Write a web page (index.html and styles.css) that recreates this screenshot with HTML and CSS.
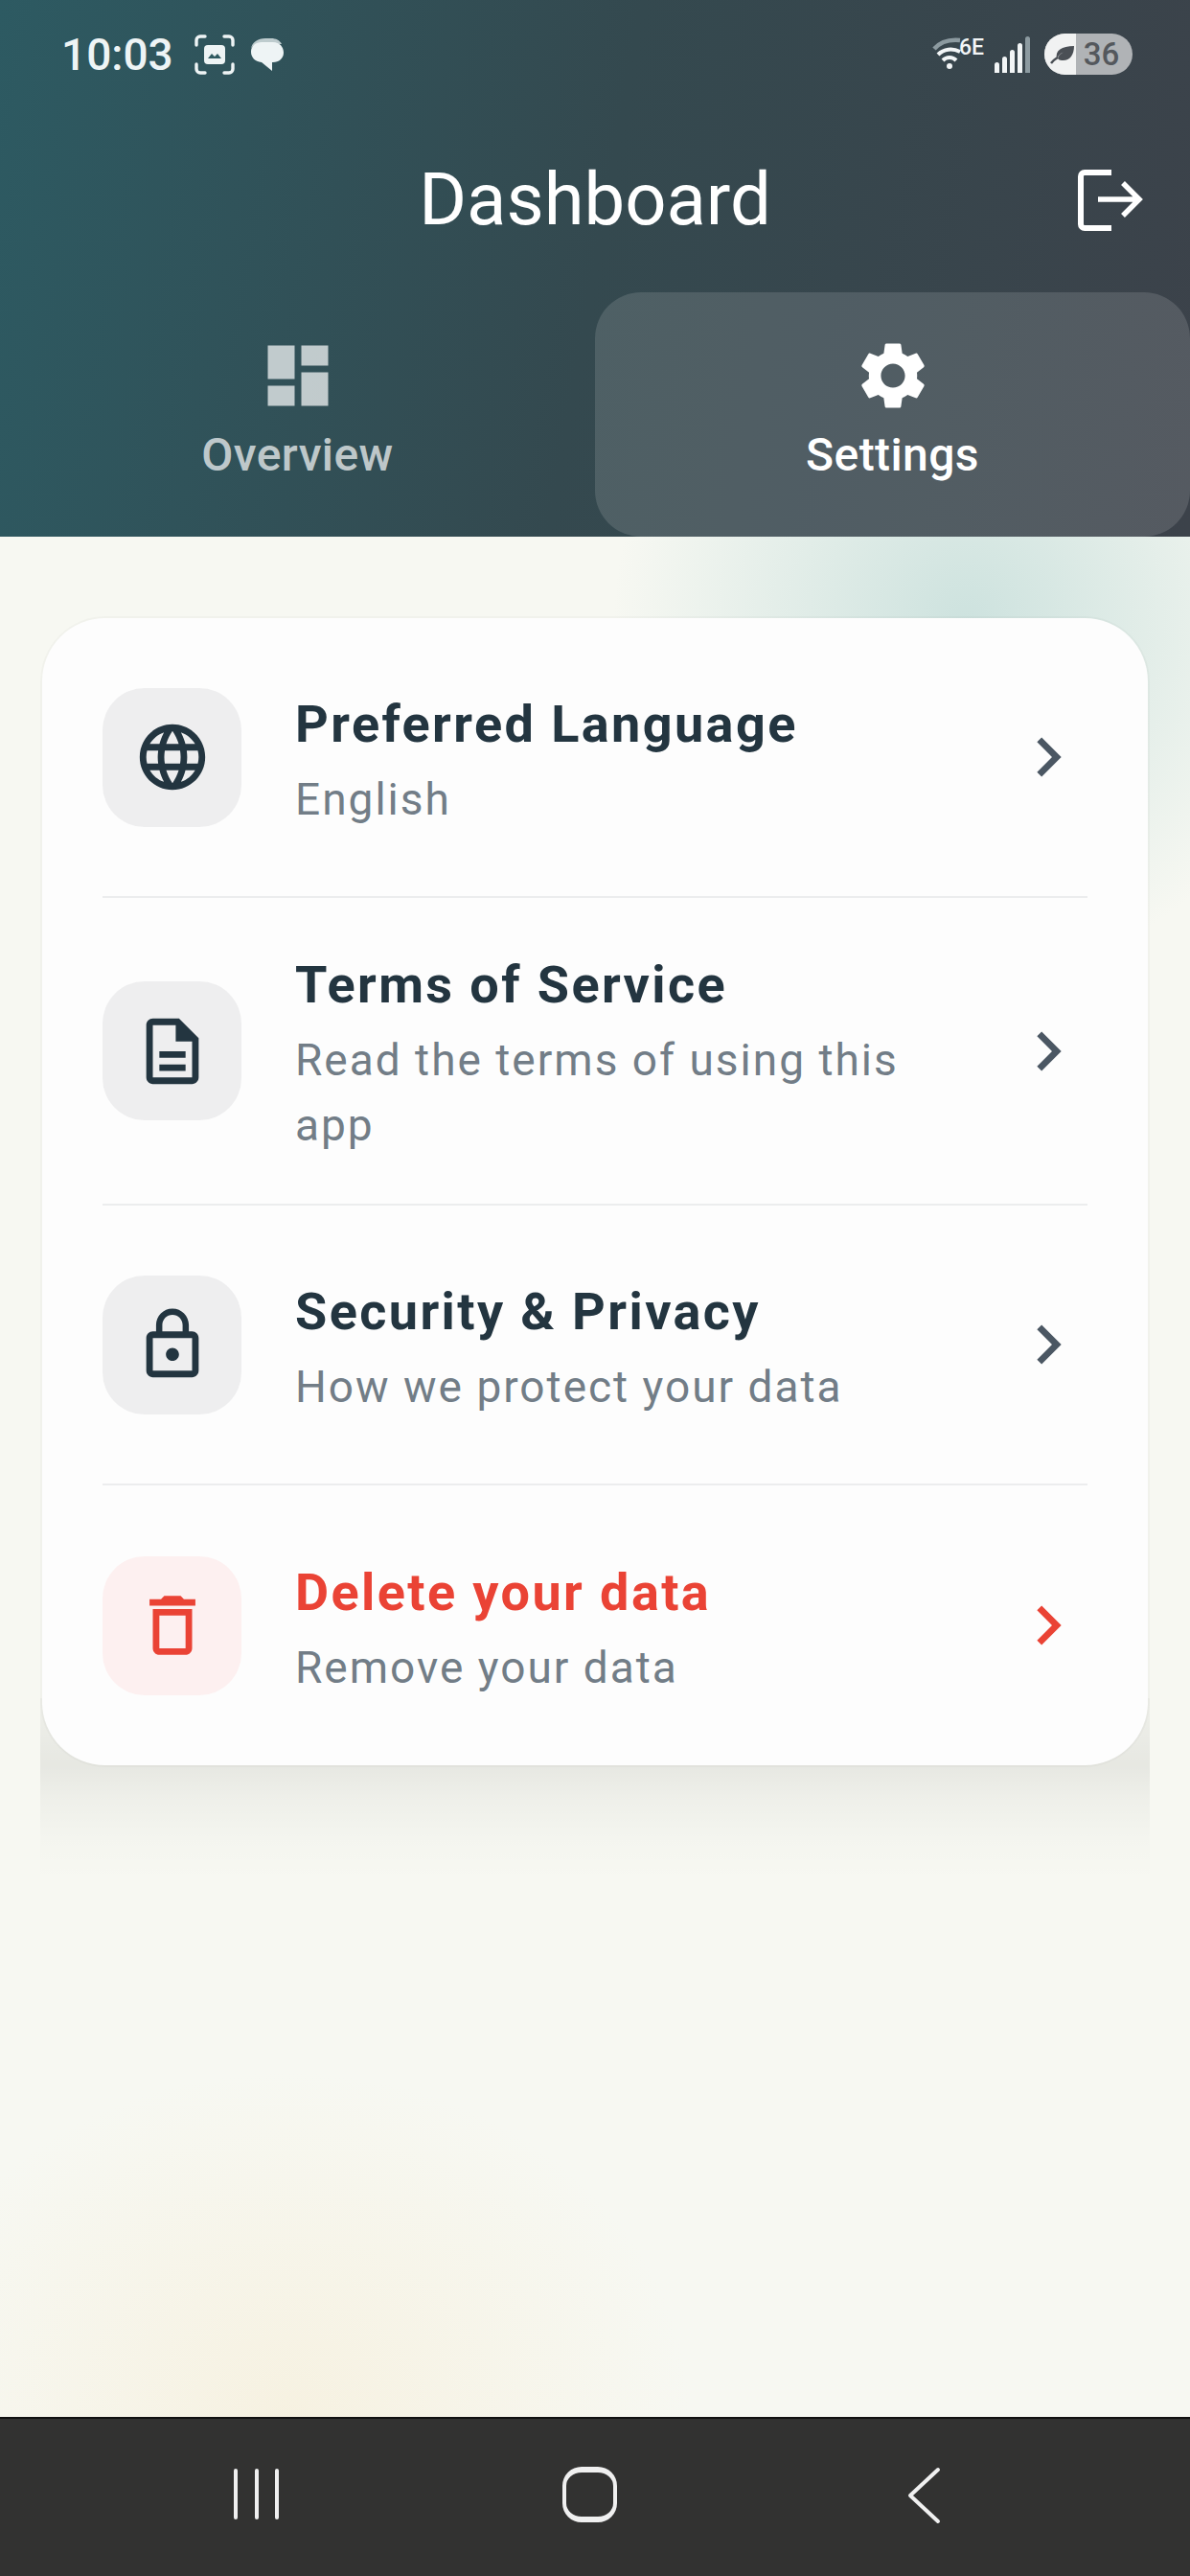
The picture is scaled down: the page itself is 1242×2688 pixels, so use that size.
FILE: index.html
```html
<!DOCTYPE html>
<html lang="en">
<head>
    <meta charset="UTF-8">
    <meta name="viewport" content="width=device-width, initial-scale=1.0">
    <title>Dashboard</title>
    <link rel="stylesheet" href="styles.css">
</head>
<body>
    <div class="phone">
        <header class="header">
            <div class="status-bar">
                <div class="status-left">
                    <span class="clock">10:03</span>
                    <svg class="status-shot" viewBox="0 0 42 42">
                        <path d="M2 11V6a4 4 0 0 1 4-4h5M31 2h5a4 4 0 0 1 4 4v5M40 31v5a4 4 0 0 1-4 4h-5M11 40H6a4 4 0 0 1-4-4v-5" fill="none" stroke="#eef4f5" stroke-width="3.4" stroke-linecap="round"/>
                        <rect x="10" y="11" width="22" height="20" rx="4" fill="#eef4f5"/>
                        <path d="M14 25l4-5 3 3 3-3 4 5z" fill="#2f5a60"/>
                    </svg>
                    <svg class="status-chat" viewBox="0 0 37 36">
                        <path d="M2 12C3 5 9 1 17 1h6c5 0 9 2 11 6H12C7 7 3 9 2 12z" fill="#eef4f5" opacity=".75"/>
                        <path d="M13 5h12c7 0 11 5 11 11s-5 10-11 10h-1v9L13 26C6 25 2 21 2 15S7 5 13 5z" fill="#eef4f5"/>
                    </svg>
                </div>
                <div class="status-right">
                    <div class="wifi">
                        <svg class="wifi-arcs" viewBox="0 0 34 34">
                            <path d="M2 13C9 5 19 3 29 4" fill="none" stroke="#8c9aa0" stroke-width="4.5"/>
                            <path d="M6 19c6-6 15-7 23-3" fill="none" stroke="#f2f5f6" stroke-width="4"/>
                            <path d="M11 25c4-4 10-4 14 0" fill="none" stroke="#f2f5f6" stroke-width="4"/>
                            <circle cx="18" cy="31" r="3" fill="#f2f5f6"/>
                        </svg>
                        <span class="wifi-label">6E</span>
                    </div>
                    <div class="signal">
                        <span class="bar bar-1"></span>
                        <span class="bar bar-2"></span>
                        <span class="bar bar-3"></span>
                        <span class="bar bar-4"></span>
                        <span class="bar bar-5"></span>
                    </div>
                    <div class="battery">
                        <div class="battery-fill">
                            <svg class="leaf" viewBox="0 0 26 20">
                                <path d="M7 14C5 6 12 1 25 1c0 10-5 16-13 15-2 0-3-1-4-2 1-4 5-7 10-8-5 1-8 3-11 8z" fill="#4a4f55"/>
                                <path d="M1 19c2-3 4-4 7-6" fill="none" stroke="#4a4f55" stroke-width="2.4"/>
                            </svg>
                        </div>
                        <span class="battery-num">36</span>
                    </div>
                </div>
            </div>

            <div class="app-bar">
                <h1>Dashboard</h1>
                <svg class="logout" viewBox="0 0 68 64">
                    <path d="M35 3H7a4 4 0 0 0-4 4v50a4 4 0 0 0 4 4h28" fill="none" stroke="#fff" stroke-width="6"/>
                    <path d="M21 31h42M47 14l17 17-17 17" fill="none" stroke="#fff" stroke-width="5.5"/>
                </svg>
            </div>

            <nav class="tabs">
                <div class="tab">
                    <svg class="tab-icon" viewBox="0 0 24 24"><path d="M3 13h8V3H3v10zm0 8h8v-6H3v6zm10 0h8V11h-8v10zm0-18v6h8V3h-8z"/></svg>
                    <span>Overview</span>
                </div>
                <div class="tab active">
                    <svg class="tab-icon" viewBox="0 0 24 24"><path d="M19.14 12.94c.04-.3.06-.61.06-.94 0-.32-.02-.64-.07-.94l2.03-1.58c.18-.14.23-.41.12-.61l-1.92-3.32c-.12-.22-.37-.29-.59-.22l-2.39.96c-.5-.38-1.03-.7-1.62-.94l-.36-2.54c-.04-.24-.24-.41-.48-.41h-3.84c-.24 0-.43.17-.47.41l-.36 2.54c-.59.24-1.13.57-1.62.94l-2.39-.96c-.22-.08-.47 0-.59.22L2.74 8.87c-.12.21-.08.47.12.61l2.03 1.58c-.05.3-.09.63-.09.94s.02.64.07.94l-2.03 1.58c-.18.14-.23.41-.12.61l1.92 3.32c.12.22.37.29.59.22l2.39-.96c.5.38 1.03.7 1.62.94l.36 2.54c.05.24.24.41.48.41h3.84c.24 0 .44-.17.47-.41l.36-2.54c.59-.24 1.13-.56 1.62-.94l2.39.96c.22.08.47 0 .59-.22l1.92-3.32c.12-.22.07-.47-.12-.61l-2.01-1.58zM12 15.6c-1.98 0-3.6-1.62-3.6-3.6s1.62-3.6 3.6-3.6 3.6 1.62 3.6 3.6-1.62 3.6-3.6 3.6z"/></svg>
                    <span>Settings</span>
                </div>
            </nav>
        </header>

        <main class="content">
            <section class="card">
                <div class="row">
                    <div class="row-icon">
                        <svg viewBox="0 0 24 24"><path d="M11.99 2C6.47 2 2 6.48 2 12s4.47 10 9.99 10C17.52 22 22 17.52 22 12S17.52 2 11.99 2zm6.93 6h-2.95c-.32-1.25-.78-2.45-1.38-3.56 1.84.63 3.37 1.91 4.33 3.56zM12 4.04c.83 1.2 1.48 2.53 1.91 3.96h-3.82c.43-1.43 1.08-2.76 1.91-3.96zM4.26 14C4.1 13.36 4 12.69 4 12s.1-1.36.26-2h3.38c-.08.66-.14 1.32-.14 2 0 .68.06 1.34.14 2H4.26zm.82 2h2.95c.32 1.25.78 2.45 1.38 3.56-1.84-.63-3.37-1.9-4.33-3.56zm2.95-8H5.08c.96-1.66 2.49-2.93 4.33-3.56C8.81 5.55 8.35 6.75 8.03 8zM12 19.96c-.83-1.2-1.48-2.53-1.91-3.96h3.82c-.43 1.43-1.08 2.76-1.91 3.96zM14.34 14H9.66c-.09-.66-.16-1.32-.16-2 0-.68.07-1.35.16-2h4.68c.09.65.16 1.32.16 2 0 .68-.07 1.34-.16 2zm.25 5.56c.6-1.11 1.06-2.31 1.38-3.56h2.95c-.96 1.65-2.49 2.93-4.33 3.56zM16.36 14c.08-.66.14-1.32.14-2 0-.68-.06-1.34-.14-2h3.38c.16.64.26 1.31.26 2s-.1 1.36-.26 2h-3.38z"/></svg>
                    </div>
                    <div class="row-text">
                        <div class="row-title">Preferred Language</div>
                        <div class="row-sub">English</div>
                    </div>
                    <svg class="chevron" viewBox="0 0 24 24"><path d="M10 6L8.59 7.41 13.17 12l-4.58 4.59L10 18l6-6z"/></svg>
                </div>
                <div class="row">
                    <div class="row-icon">
                        <svg viewBox="0 0 24 24"><path d="M8 16h8v2H8zm0-4h8v2H8zm6-10H6c-1.1 0-2 .9-2 2v16c0 1.1.89 2 1.99 2H18c1.1 0 2-.9 2-2V8l-6-6zm4 18H6V4h7v5h5v11z"/></svg>
                    </div>
                    <div class="row-text">
                        <div class="row-title">Terms of Service</div>
                        <div class="row-sub">Read the terms of using this app</div>
                    </div>
                    <svg class="chevron" viewBox="0 0 24 24"><path d="M10 6L8.59 7.41 13.17 12l-4.58 4.59L10 18l6-6z"/></svg>
                </div>
                <div class="row">
                    <div class="row-icon">
                        <svg viewBox="0 0 24 24"><path d="M12 17c1.1 0 2-.9 2-2s-.9-2-2-2-2 .9-2 2 .9 2 2 2zm6-9h-1V6c0-2.76-2.24-5-5-5S7 3.24 7 6v2H6c-1.1 0-2 .9-2 2v10c0 1.1.9 2 2 2h12c1.1 0 2-.9 2-2V10c0-1.1-.9-2-2-2zM8.9 6c0-1.71 1.39-3.1 3.1-3.1s3.1 1.39 3.1 3.1v2H8.9V6zM18 20H6V10h12v10z"/></svg>
                    </div>
                    <div class="row-text">
                        <div class="row-title">Security &amp; Privacy</div>
                        <div class="row-sub">How we protect your data</div>
                    </div>
                    <svg class="chevron" viewBox="0 0 24 24"><path d="M10 6L8.59 7.41 13.17 12l-4.58 4.59L10 18l6-6z"/></svg>
                </div>
                <div class="row danger">
                    <div class="row-icon">
                        <svg viewBox="0 0 24 24"><path d="M6 19c0 1.1.9 2 2 2h8c1.1 0 2-.9 2-2V7H6v12zM8 9h8v10H8V9zm7.5-5l-1-1h-5l-1 1H5v2h14V4z"/></svg>
                    </div>
                    <div class="row-text">
                        <div class="row-title">Delete your data</div>
                        <div class="row-sub">Remove your data</div>
                    </div>
                    <svg class="chevron" viewBox="0 0 24 24"><path d="M10 6L8.59 7.41 13.17 12l-4.58 4.59L10 18l6-6z"/></svg>
                </div>
            </section>
        </main>

        <footer class="nav-bar">
            <div class="nav-recents"><span></span><span></span><span></span></div>
            <div class="nav-home"></div>
            <svg class="nav-back" viewBox="0 0 36 60"><path d="M33 3L4 30l29 27" fill="none" stroke="#f0f0f0" stroke-width="4" stroke-linecap="round" stroke-linejoin="round"/></svg>
        </footer>
    </div>
</body>
</html>
```

FILE: styles.css
```css
* {
    box-sizing: border-box;
}

body {
    margin: 0;
    font-family: Roboto, "Liberation Sans", sans-serif;
    background-color: #f7f8f2;
}

.phone {
    width: 1242px;
    height: 2688px;
    display: flex;
    flex-direction: column;
    overflow: hidden;
}

/* header */
.header {
    height: 560px;
    display: flex;
    flex-direction: column;
    background: linear-gradient(100deg, #2d5a62 0%, #34494f 50%, #3c424a 100%);
    color: #fff;
}

.status-bar {
    height: 115px;
    padding: 35px 60px 0 64px;
    display: flex;
    justify-content: space-between;
    align-items: flex-start;
}

.status-left,
.status-right {
    display: flex;
    align-items: center;
}

.clock {
    font-size: 46px;
    font-weight: 500;
    line-height: 44px;
    color: #eef4f5;
}

.status-shot {
    width: 42px;
    height: 42px;
    margin-left: 22px;
}

.status-chat {
    width: 37px;
    height: 36px;
    margin-left: 15px;
}

.wifi {
    width: 54px;
    height: 38px;
    position: relative;
}

.wifi-arcs {
    width: 34px;
    height: 34px;
    display: block;
}

.wifi-label {
    position: absolute;
    top: 0;
    right: 0;
    font-size: 23px;
    font-weight: 500;
    line-height: 24px;
    color: #f2f5f6;
}

.signal {
    width: 37px;
    height: 38px;
    margin-left: 11px;
    display: flex;
    align-items: flex-end;
    justify-content: space-between;
}

.bar {
    width: 5px;
    border-radius: 3px 3px 0 0;
    background-color: #f2f5f6;
}

.bar-1 { height: 11px; }
.bar-2 { height: 17px; }
.bar-3 { height: 24px; }
.bar-4 { height: 31px; }
.bar-5 { height: 38px; background-color: #8c9aa0; }

.battery {
    width: 92px;
    height: 43px;
    margin-left: 15px;
    border-radius: 22px;
    overflow: hidden;
    display: flex;
    background-color: #b0b3b6;
}

.battery-fill {
    width: 33px;
    display: flex;
    align-items: center;
    justify-content: flex-end;
    padding-right: 1px;
    background-color: #f1f2f2;
}

.leaf {
    width: 26px;
    height: 20px;
}

.battery-num {
    flex: 1;
    padding-right: 6px;
    text-align: center;
    font-size: 33px;
    font-weight: 500;
    line-height: 43px;
    color: #54585d;
}

.app-bar {
    height: 190px;
    position: relative;
    display: flex;
    align-items: flex-start;
    justify-content: center;
}

.app-bar h1 {
    margin: 0;
    padding-top: 47px;
    font-size: 76px;
    font-weight: 400;
    line-height: 92px;
}

.logout {
    position: absolute;
    top: 62px;
    right: 49px;
    width: 68px;
    height: 64px;
}

.tabs {
    flex: 1;
    display: flex;
}

.tab {
    flex: 1;
    display: flex;
    flex-direction: column;
    align-items: center;
    padding-top: 45px;
    font-size: 48px;
    font-weight: 500;
    letter-spacing: 0.4px;
    color: rgba(255, 255, 255, 0.7);
    border-radius: 48px;
}

.tab span {
    margin-top: 13px;
    line-height: 56px;
}

.tab-icon {
    width: 84px;
    height: 84px;
    fill: currentColor;
}

.tab.active {
    color: #fff;
    background-color: rgba(255, 255, 255, 0.13);
}

/* settings list */
.content {
    flex: 1;
    position: relative;
    z-index: 0;
    padding: 85px 44px 0;
    background:
        radial-gradient(circle 370px at 1010px 90px, rgba(170, 208, 206, 0.55), transparent),
        radial-gradient(ellipse 420px 360px at 300px 100%, rgba(246, 238, 216, 0.65), transparent);
}

.card {
    position: relative;
    border-radius: 66px;
    padding: 0 63px;
    background-color: #fdfdfd;
    box-shadow: 0 0 0 2px rgba(0, 0, 0, 0.025);
}

/* soft shadow under the card, cut off straight at the sides */
.card::after {
    content: "";
    position: absolute;
    z-index: -1;
    left: -2px;
    right: -2px;
    top: calc(100% - 70px);
    height: 190px;
    background: linear-gradient(rgba(0, 0, 0, 0.03), rgba(0, 0, 0, 0.065) 37%, rgba(0, 0, 0, 0.035) 55%, rgba(0, 0, 0, 0.012) 78%, rgba(0, 0, 0, 0));
}

.row {
    min-height: 292px;
    display: flex;
    align-items: center;
    padding: 48px 0;
    border-bottom: 2px solid #ecedee;
}

.row:last-child {
    border-bottom: none;
}

.row-icon {
    width: 145px;
    height: 145px;
    flex-shrink: 0;
    display: flex;
    align-items: center;
    justify-content: center;
    border-radius: 44px;
    background-color: #eeeeef;
    fill: #233540;
}

.row-icon svg {
    width: 82px;
    height: 82px;
}

.row-text {
    flex: 1;
    margin: 0 45px 0 56px;
    padding-top: 8px;
}

.row-title {
    font-size: 54px;
    font-weight: 700;
    line-height: 70px;
    letter-spacing: 2.4px;
    color: #233540;
}

.row-sub {
    margin-top: 9px;
    font-size: 46px;
    line-height: 68px;
    letter-spacing: 2px;
    color: #727d87;
}

.chevron {
    width: 82px;
    height: 82px;
    flex-shrink: 0;
    fill: #4b5763;
}

.danger .row-icon {
    background-color: #fdf0f0;
    fill: #ea4335;
}

.danger .row-title {
    color: #ea4335;
}

.danger .chevron {
    fill: #ea4335;
}

/* android nav */
.nav-bar {
    height: 166px;
    position: relative;
    background-color: #323231;
    border-top: 2px solid #111;
}

.nav-recents {
    position: absolute;
    left: 244px;
    top: 52px;
    width: 47px;
    height: 53px;
    display: flex;
    justify-content: space-between;
}

.nav-recents span {
    width: 4px;
    border-radius: 2px;
    background-color: #f0f0f0;
}

.nav-home {
    position: absolute;
    left: 587px;
    top: 50px;
    width: 57px;
    height: 58px;
    border: solid #f0f0f0;
    border-width: 6px 4px;
    border-radius: 20px;
}

.nav-back {
    position: absolute;
    left: 946px;
    top: 50px;
    width: 36px;
    height: 60px;
}
```
